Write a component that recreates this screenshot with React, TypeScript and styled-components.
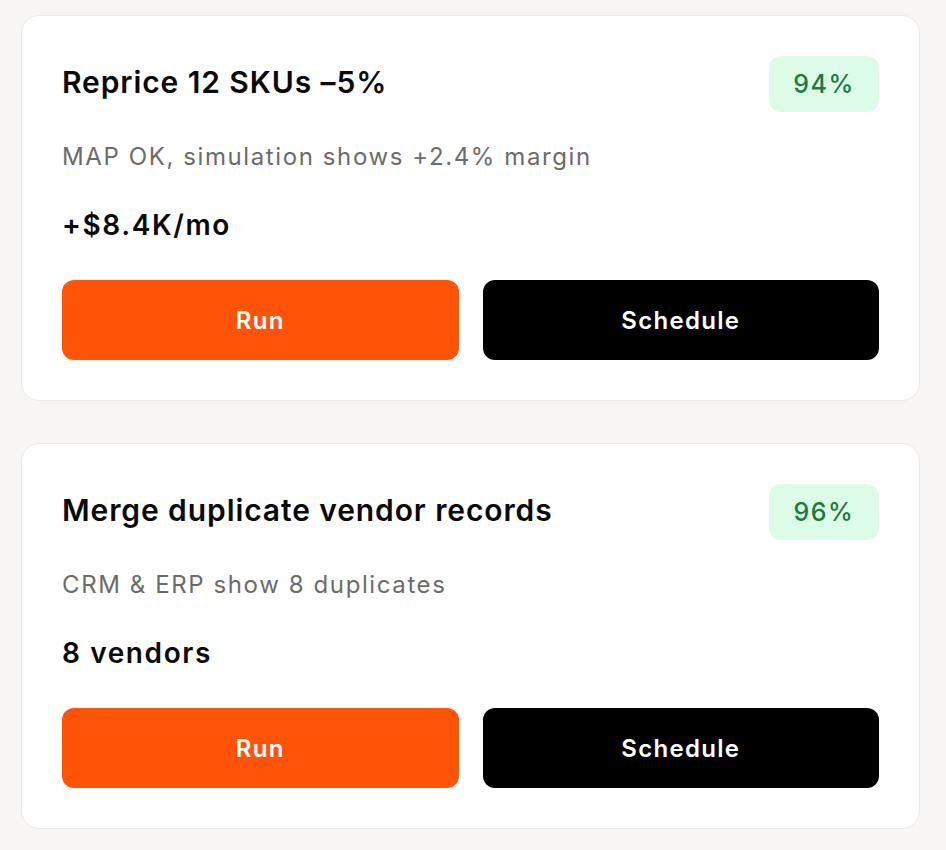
import styled, { createGlobalStyle } from 'styled-components';

const GlobalStyle = createGlobalStyle`
  html, body {
    margin: 0;
    padding: 0;
    background: #f8f7f5;
    font-family: Inter, "Noto Sans", "Liberation Sans", sans-serif;
    -webkit-font-smoothing: antialiased;
  }
`;

const Page = styled.div`
  display: flex;
  flex-direction: column;
  gap: 42px;
  padding: 15px 26px 20px 21px;
`;

const Card = styled.div`
  background: #ffffff;
  border: 1px solid #ebe9e6;
  border-radius: 18px;
  padding: 40px;
  display: flex;
  flex-direction: column;
`;

const Header = styled.div`
  display: flex;
  align-items: center;
  justify-content: space-between;
  height: 56px;
`;

const Title = styled.h2`
  margin: 0 0 4px 0;
  font-size: 30px;
  line-height: 36px;
  font-weight: 600;
  color: #0a0a0a;
  letter-spacing: 0.9px;
`;

const Badge = styled.span`
  display: inline-flex;
  align-items: center;
  justify-content: center;
  width: 110px;
  height: 56px;
  border-radius: 12px;
  background: #dcfce7;
  color: #1a7a40;
  font-size: 25px;
  font-weight: 500;
  letter-spacing: 1.5px;
`;

const Subtitle = styled.p`
  margin: 27px 0 0 0;
  font-size: 24px;
  line-height: 36px;
  color: #6b6b6b;
  letter-spacing: 1.6px;
`;

const Value = styled.div`
  margin-top: 33px;
  font-size: 28px;
  line-height: 34px;
  font-weight: 600;
  color: #0a0a0a;
  letter-spacing: 1.6px;
`;

const Actions = styled.div`
  display: grid;
  grid-template-columns: 1fr 1fr;
  gap: 24px;
  margin-top: 38px;
`;

const Button = styled.button<{ $variant: 'primary' | 'dark' }>`
  height: 80px;
  border: none;
  border-radius: 12px;
  font-family: inherit;
  font-size: 24px;
  font-weight: 600;
  letter-spacing: 1.3px;
  color: #ffffff;
  cursor: pointer;
  background: ${({ $variant }) => ($variant === 'primary' ? '#ff5308' : '#000000')};
`;

const actions = [
  {
    title: 'Reprice 12 SKUs –5%',
    score: '94%',
    detail: 'MAP OK, simulation shows +2.4% margin',
    impact: '+$8.4K/mo',
  },
  {
    title: 'Merge duplicate vendor records',
    score: '96%',
    detail: 'CRM & ERP show 8 duplicates',
    impact: '8 vendors',
  },
];

export default function App() {
  return (
    <>
      <GlobalStyle />
      <Page>
        {actions.map((a) => (
          <Card key={a.title}>
            <Header>
              <Title>{a.title}</Title>
              <Badge>{a.score}</Badge>
            </Header>
            <Subtitle>{a.detail}</Subtitle>
            <Value>{a.impact}</Value>
            <Actions>
              <Button $variant="primary">Run</Button>
              <Button $variant="dark">Schedule</Button>
            </Actions>
          </Card>
        ))}
      </Page>
    </>
  );
}
